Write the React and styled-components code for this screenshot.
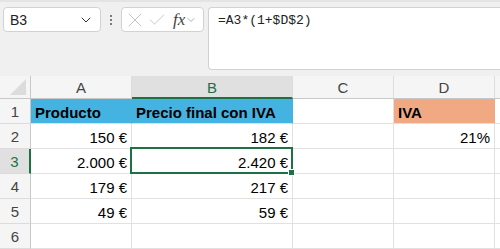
import React from 'react'
import styled, { createGlobalStyle } from 'styled-components'
import { ChevronDown, X, Check } from 'lucide-react'

const Global = createGlobalStyle`
  html, body { margin: 0; padding: 0; background: #f0f0f0; overflow: hidden; }
  body { font-family: "Liberation Sans", Arial, sans-serif; }
`

const Page = styled.div`
  width: 500px;
  height: 249px;
  overflow: hidden;
  background: #f0f0f0;
  border-top: 2px solid #e4e4e4;
  box-sizing: border-box;
`

const FormulaBar = styled.div`
  display: flex;
  align-items: flex-start;
  padding: 5px 0 0 3px;
  height: 74px;
  box-sizing: border-box;
`

const NameBox = styled.div`
  width: 98px;
  height: 25px;
  box-sizing: border-box;
  background: #fff;
  border: 1px solid #d2d2d2;
  border-radius: 4px;
  display: flex;
  align-items: center;
  justify-content: space-between;
  padding: 0 6px 0 6px;
  font-size: 14px;
  color: #222;
`

const Dots = styled.div`
  width: 20px;
  height: 25px;
  display: flex;
  flex-direction: column;
  align-items: center;
  justify-content: center;
  gap: 2px;
  span {
    width: 2px;
    height: 2px;
    background: #555;
    border-radius: 1px;
  }
`

const FxBox = styled.div`
  width: 83px;
  height: 25px;
  box-sizing: border-box;
  background: #fff;
  border: 1px solid #d2d2d2;
  border-radius: 4px;
  display: flex;
  align-items: center;
  padding: 0 0 0 0;
  color: #c4c4c4;
  svg { flex: none; }
`

const Fx = styled.span`
  font-family: "Liberation Serif", "Times New Roman", serif;
  font-style: italic;
  font-size: 17px;
  color: #444;
  margin-left: 6px;
  margin-right: 0;
`

const FormulaInput = styled.div`
  flex: 1;
  margin-left: 4px;
  height: 63px;
  box-sizing: border-box;
  background: #fff;
  border: 1px solid #d2d2d2;
  border-right: none;
  border-radius: 4px 0 0 4px;
  margin-right: -10px;
  padding: 5px 0 0 9px;
  font-family: "Liberation Mono", "Courier New", monospace;
  font-size: 13px;
  color: #222;
`

const Sheet = styled.div`
  display: grid;
  grid-template-columns: 31px 101px 161px 101px 101px 1fr;
  grid-auto-rows: 25px;
  grid-template-rows: 23px;
  background: #fff;
`

const Corner = styled.div`
  background: #f5f5f5;
  border-right: 1px solid #c8c8c8;
  border-bottom: 1px solid #c8c8c8;
  position: relative;
  &::after {
    content: '';
    position: absolute;
    right: 4px;
    bottom: 3px;
    width: 0;
    height: 0;
    border-left: 16px solid transparent;
    border-bottom: 16px solid #dcdcdc;
  }
`

const ColHead = styled.div`
  background: ${p => (p.$active ? '#e0e0e0' : '#f5f5f5')};
  border-right: 1px solid #dcdcdc;
  border-bottom: ${p => (p.$active ? '2px solid #1e7145' : '1px solid #c8c8c8')};
  color: ${p => (p.$active ? '#1e7145' : '#444')};
  font-size: 15px;
  display: flex;
  align-items: center;
  justify-content: center;
  padding-top: 1px;
  box-sizing: border-box;
`

const RowHead = styled.div`
  background: ${p => (p.$active ? '#e0e0e0' : '#f5f5f5')};
  border-right: ${p => (p.$active ? '2px solid #1e7145' : '1px solid #c8c8c8')};
  border-bottom: 1px solid #dcdcdc;
  color: ${p => (p.$active ? '#1e7145' : '#444')};
  font-size: 15px;
  display: flex;
  align-items: center;
  justify-content: center;
  box-sizing: border-box;
`

const Cell = styled.div`
  position: relative;
  background: ${p => p.$fill || '#fff'};
  border-right: 1px solid ${p => (p.$fill ? p.$fill : '#e1e1e1')};
  border-bottom: 1px solid #e1e1e1;
  font-size: 15px;
  font-weight: ${p => (p.$bold ? 700 : 400)};
  color: #000;
  display: flex;
  align-items: center;
  justify-content: ${p => (p.$right ? 'flex-end' : 'flex-start')};
  padding: 2px 4px 0 4px;
  box-sizing: border-box;
  white-space: nowrap;

  ${p =>
    p.$selected &&
    `
    &::after {
      content: '';
      position: absolute;
      left: -2px;
      top: -2px;
      right: -1px;
      bottom: -1px;
      border: 2px solid #1e7145;
      pointer-events: none;
    }
    &::before {
      content: '';
      position: absolute;
      right: -3px;
      bottom: -3px;
      width: 5px;
      height: 5px;
      background: #1e7145;
      border: 1px solid #fff;
      z-index: 2;
    }
  `}
`

const BLUE = '#44b3e1'
const ORANGE = '#f1a983'

const rows = [
  { n: 1, a: 'Producto', b: 'Precio final con IVA', d: 'IVA', head: true },
  { n: 2, a: '150 €', b: '182 €', d: '21%' },
  { n: 3, a: '2.000 €', b: '2.420 €', d: '', sel: true },
  { n: 4, a: '179 €', b: '217 €', d: '' },
  { n: 5, a: '49 €', b: '59 €', d: '' },
  { n: 6, a: '', b: '', d: '' },
]

const App = () => {
  return (
    <Page>
      <Global />
      <FormulaBar>
        <NameBox>
          <span>B3</span>
          <ChevronDown size={16} strokeWidth={1.5} color="#333" />
        </NameBox>
        <Dots>
          <span />
          <span />
          <span />
        </Dots>
        <FxBox>
          <X size={24} strokeWidth={1} style={{ marginLeft: 1 }} />
          <Check size={20} strokeWidth={1.1} />
          <Fx>fx</Fx>
          <ChevronDown size={12} strokeWidth={1.5} color="#999" />
        </FxBox>
        <FormulaInput>=A3*(1+$D$2)</FormulaInput>
      </FormulaBar>
      <Sheet>
        <Corner />
        <ColHead>A</ColHead>
        <ColHead $active>B</ColHead>
        <ColHead>C</ColHead>
        <ColHead>D</ColHead>
        <ColHead />
        {rows.map(r => (
          <React.Fragment key={r.n}>
            <RowHead $active={r.sel}>{r.n}</RowHead>
            <Cell $fill={r.head ? BLUE : null} $bold={r.head} $right={!r.head}>
              {r.a}
            </Cell>
            <Cell $fill={r.head ? BLUE : null} $bold={r.head} $right={!r.head} $selected={r.sel}>
              {r.b}
            </Cell>
            <Cell />
            <Cell $fill={r.head ? ORANGE : null} $bold={r.head} $right={!r.head}>
              {r.d}
            </Cell>
            <Cell />
          </React.Fragment>
        ))}
      </Sheet>
    </Page>
  )
}

export default App
